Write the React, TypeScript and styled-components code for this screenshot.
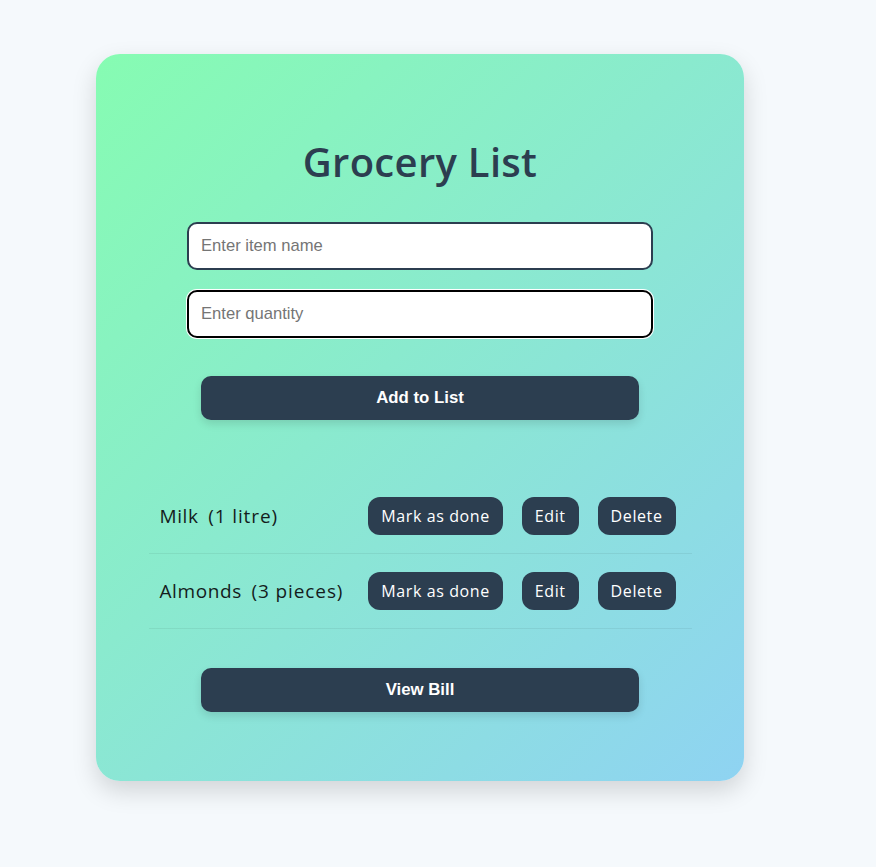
import React, { memo } from 'react'
import styled, { createGlobalStyle } from 'styled-components'

const GlobalStyle = createGlobalStyle`
  body {
    margin: 0;
    background: #f5f9fc;
    font-family: 'Open Sans', 'Noto Sans', sans-serif;
  }
`

const Page = styled.div`
  min-height: 867px;
  padding: 54px 0 0 96px;
  box-sizing: border-box;
`

const Card = styled.div`
  width: 648px;
  height: 727px;
  box-sizing: border-box;
  padding: 78px 0 0;
  border-radius: 24px;
  background: linear-gradient(135deg, #86fcb2 0%, #8fd3f2 100%);
  box-shadow: 0 10px 25px rgba(0, 0, 0, 0.15);
  display: flex;
  flex-direction: column;
  align-items: center;
`

const Title = styled.h1`
  margin: 0 0 30px;
  height: 60px;
  line-height: 60px;
  font-size: 40px;
  font-weight: 600;
  color: #2c3e50;
  letter-spacing: 0.3px;
`

const Input = styled.input<{ $active?: boolean }>`
  width: 466px;
  height: 48px;
  box-sizing: border-box;
  padding: 0 12px;
  margin-bottom: 20px;
  border: 2px solid ${(p) => (p.$active ? '#000' : '#2c3e50')};
  border-radius: 10px;
  background: #fff;
  font-family: 'Liberation Sans', Arial, sans-serif;
  font-size: 16.6px;
  color: #222;
  outline: none;
  box-shadow: ${(p) => (p.$active ? '0 0 0 1px #fff' : 'none')};

  &::placeholder {
    color: #757575;
  }
`

const WideButton = styled.button<{ $top: number }>`
  width: 438px;
  height: 44px;
  margin-top: ${(p) => p.$top}px;
  border: none;
  border-radius: 10px;
  background: #2c3e50;
  color: #fff;
  font-family: 'Liberation Sans', Arial, sans-serif;
  font-size: 16.8px;
  font-weight: 700;
  box-shadow: 0 4px 8px rgba(0, 0, 0, 0.12);
  cursor: pointer;
`

const List = styled.ul`
  width: 543px;
  margin: 59px 0 0;
  padding: 0;
  list-style: none;
`

const Row = styled.li`
  display: flex;
  align-items: center;
  padding: 18px 16px 18px 11px;
  border-bottom: 1px solid rgba(0, 0, 0, 0.06);
`

const ItemText = styled.span`
  flex: 1;
  font-size: 19px;
  letter-spacing: 0.6px;
  color: #141c1c;
  white-space: nowrap;

  .qty {
    margin-left: 4px;
    letter-spacing: 0.9px;
  }
`

const Actions = styled.div`
  display: flex;
  gap: 19px;
`

const SmallButton = styled.button`
  height: 38px;
  padding: 0 13px;
  border: none;
  border-radius: 12px;
  background: #2c3e50;
  color: #fff;
  font-family: 'Open Sans', 'Noto Sans', sans-serif;
  font-size: 16px;
  font-weight: 500;
  letter-spacing: 0.6px;
  cursor: pointer;
`

const items = [
  { name: 'Milk', qty: '(1 litre)' },
  { name: 'Almonds', qty: '(3 pieces)' },
]

const App: React.FC = memo(() => {
  return (
    <Page>
      <GlobalStyle />
      <Card>
        <Title>Grocery List</Title>
        <Input placeholder="Enter item name" />
        <Input placeholder="Enter quantity" $active autoFocus />
        <WideButton $top={18}>Add to List</WideButton>
        <List>
          {items.map((item) => (
            <Row key={item.name}>
              <ItemText>
                {item.name} <span className="qty">{item.qty}</span>
              </ItemText>
              <Actions>
                <SmallButton>Mark as done</SmallButton>
                <SmallButton>Edit</SmallButton>
                <SmallButton>Delete</SmallButton>
              </Actions>
            </Row>
          ))}
        </List>
        <WideButton $top={39}>View Bill</WideButton>
      </Card>
    </Page>
  )
})

export default App
